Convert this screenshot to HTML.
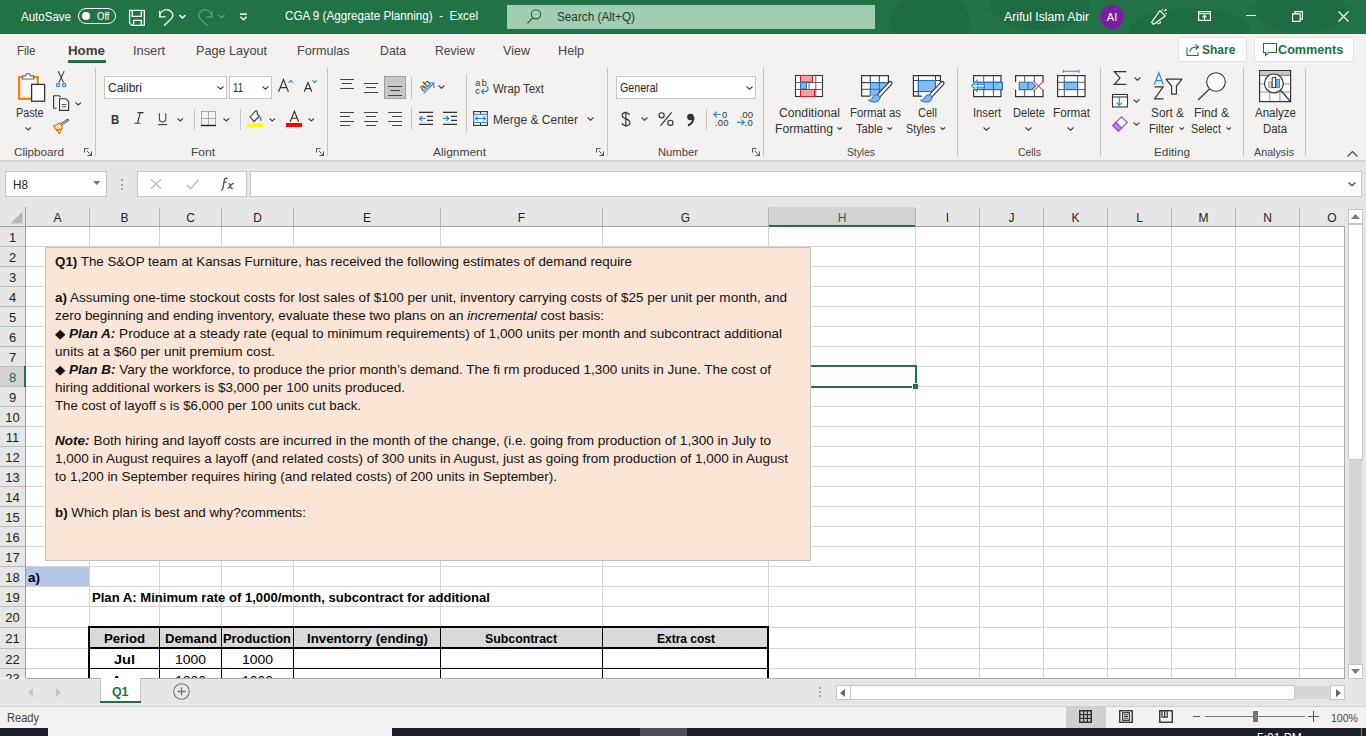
<!DOCTYPE html>
<html><head><meta charset="utf-8"><style>
*{margin:0;padding:0;box-sizing:border-box}
html,body{width:1366px;height:736px;overflow:hidden;background:#fff;font-family:"Liberation Sans",sans-serif;color:#262626}
.a{position:absolute;white-space:nowrap}
.t{position:absolute;white-space:nowrap;line-height:1}
svg{position:absolute;overflow:visible}
</style></head><body>
<div class="a" style="left:0px;top:0px;width:1366px;height:34px;background:#217346;"></div>
<svg style="left:0px;top:0px;overflow:hidden" width="1366" height="34" viewBox="0 0 1366 34"><g fill="#1f6c42"><ellipse cx="930" cy="22" rx="40" ry="30"/><ellipse cx="1040" cy="5" rx="50" ry="25"/><ellipse cx="1190" cy="30" rx="60" ry="22"/><ellipse cx="1300" cy="8" rx="45" ry="25"/></g></svg>
<div class="t" style="left:21.00px;top:11.44px;font-size:12px;color:#fff;;transform:scaleX(0.9607);transform-origin:0 0;">AutoSave</div>
<div class="a" style="left:78px;top:8px;width:38px;height:16px;background:transparent;border:1px solid #fff;border-radius:8px"></div>
<div class="a" style="left:82px;top:12px;width:8px;height:8px;background:#fff;border-radius:50%"></div>
<div class="t" style="left:97.00px;top:12.13px;font-size:10px;color:#fff;;transform:scaleX(0.9501);transform-origin:0 0;">Off</div>
<svg style="left:0px;top:0px;" width="260" height="34" viewBox="0 0 260 34"><g fill="none" stroke="#fff" stroke-width="1.3"><path d="M129.6 10.3h14.7v15.1H131.9l-2.3-2.3z"/><path d="M132.3 10.3v6h9v-6M133.6 25.4v-5h7.7v5"/><path d="M159.6 10.7v6.2h6.1"/><path d="M159.8 16.6a6.6 6.6 0 0 1 11.4-4.8a5 5 0 0 1 0.6 6.4L164 25.7"/><path d="M179.4 15l3 3l3-3" stroke-width="1.5"/></g><g fill="none" stroke="#5f9e7b" stroke-width="1.3"><path d="M211.9 10.7v6.2h-6.1"/><path d="M211.7 16.6a6.6 6.6 0 0 0-11.4-4.8a5 5 0 0 0-0.6 6.4L207.5 25.7"/><path d="M218.8 15l2.8 2.8l2.8-2.8" stroke-width="1.3"/></g><g fill="none" stroke="#fff" stroke-width="1.4"><path d="M240 14.1h7"/><path d="M240.4 16.8l3.1 3l3.1-3"/></g></svg>
<div class="t" style="left:285.00px;top:10.01px;font-size:12.5px;color:#fff;;transform:scaleX(0.9321);transform-origin:0 0;">CGA 9 (Aggregate Planning)&nbsp; -&nbsp; Excel</div>
<div class="a" style="left:507px;top:5px;width:368px;height:24px;background:#a0cdb4;"></div>
<svg style="left:527px;top:10px;" width="16" height="15" viewBox="0 0 16 15"><circle cx="9" cy="4.3" r="4.6" fill="none" stroke="#1b5e37" stroke-width="1.1"/><path d="M5.8 7.6L0.5 13.3" stroke="#1b5e37" stroke-width="1.2"/></svg>
<div class="t" style="left:557.00px;top:11.01px;font-size:12.5px;color:#1d3d2a;;transform:scaleX(0.9396);transform-origin:0 0;">Search (Alt+Q)</div>
<div class="t" style="left:1004.00px;top:11.01px;font-size:12.5px;color:#fff;;transform:scaleX(0.9788);transform-origin:0 0;">Ariful Islam Abir</div>
<div class="a" style="left:1100px;top:5px;width:24px;height:24px;border-radius:50%;background:#7b1fa2;color:#fff;font-size:11px;line-height:24px;text-align:center">AI</div>
<svg style="left:1140px;top:0px;" width="40" height="34" viewBox="0 0 40 34"><g transform="translate(-1140 0)" fill="none" stroke="#fff" stroke-width="1.2" stroke-linejoin="round"><path d="M1151.6 22.3L1159.9 10.6L1165.2 15.9L1153.6 24.3z"/><path d="M1156.8 22.4a1.8 1.8 0 0 0 3.5-1.2"/><path d="M1162.5 9.2v1.3M1164.4 11.2l2.2-1.9M1165.4 13.5h1.6"/></g></svg>
<svg style="left:1198px;top:11px;" width="13" height="10" viewBox="0 0 13 10"><rect x="0.6" y="0.6" width="11.8" height="8.8" fill="none" stroke="#fff" stroke-width="1.2"/><path d="M0.6 2.8h11.8M6.5 9V4.5M4.5 6.3l2-2l2 2" fill="none" stroke="#fff" stroke-width="1.1"/></svg>
<div class="a" style="left:1246px;top:15px;width:10px;height:1px;background:#fff;"></div>
<svg style="left:1292px;top:11px;" width="11" height="11" viewBox="0 0 11 11"><path d="M0.6 2.9h7.5v7.5H0.6z M2.9 2.9V0.6h7.5v7.5H8.1" fill="none" stroke="#fff" stroke-width="1.1"/></svg>
<svg style="left:1338px;top:11px;" width="11" height="11" viewBox="0 0 11 11"><path d="M0.5 0.5l10 10M10.5 0.5l-10 10" stroke="#fff" stroke-width="1.2"/></svg>
<div class="a" style="left:0px;top:34px;width:1366px;height:127px;background:#f3f2f1;"></div>
<div class="t" style="left:17.00px;top:43.59px;font-size:13px;color:#444;;transform:scaleX(0.8829);transform-origin:0 0;">File</div>
<div class="t" style="left:68.00px;top:43.59px;font-size:13px;color:#404040;font-weight:bold;transform:scaleX(1.0242);transform-origin:0 0;">Home</div>
<div class="t" style="left:133.00px;top:43.59px;font-size:13px;color:#444;;transform:scaleX(0.9841);transform-origin:0 0;">Insert</div>
<div class="t" style="left:196.00px;top:43.59px;font-size:13px;color:#444;;transform:scaleX(0.9724);transform-origin:0 0;">Page Layout</div>
<div class="t" style="left:297.00px;top:43.59px;font-size:13px;color:#444;;transform:scaleX(0.9689);transform-origin:0 0;">Formulas</div>
<div class="t" style="left:379.50px;top:43.59px;font-size:13px;color:#444;;transform:scaleX(0.9465);transform-origin:0 0;">Data</div>
<div class="t" style="left:435.30px;top:43.59px;font-size:13px;color:#444;;transform:scaleX(0.9290);transform-origin:0 0;">Review</div>
<div class="t" style="left:503.00px;top:43.59px;font-size:13px;color:#444;;transform:scaleX(0.9659);transform-origin:0 0;">View</div>
<div class="t" style="left:558.30px;top:43.59px;font-size:13px;color:#444;;transform:scaleX(0.9720);transform-origin:0 0;">Help</div>
<div class="a" style="left:68px;top:60px;width:38px;height:3px;background:#217346;"></div>
<div class="a" style="left:1178px;top:37px;width:69px;height:25px;background:#fff;border:1px solid #e1dfdd;border-radius:2px"></div>
<svg style="left:1186px;top:43px;" width="14" height="13" viewBox="0 0 14 13"><path d="M1 4.5v8h11v-3" fill="none" stroke="#217346" stroke-width="1.1"/><path d="M4 9c0-4 3-5 8-5M9.5 1.5l3 2.5l-3 2.5" fill="none" stroke="#217346" stroke-width="1.1"/></svg>
<div class="t" style="left:1202.30px;top:43.71px;font-size:12.5px;color:#217346;font-weight:bold;transform:scaleX(0.9612);transform-origin:0 0;">Share</div>
<div class="a" style="left:1254px;top:37px;width:100px;height:25px;background:#fff;border:1px solid #e1dfdd;border-radius:2px"></div>
<svg style="left:1263px;top:43px;" width="14" height="13" viewBox="0 0 14 13"><path d="M0.5 0.5h13v9h-8l-3 3v-3h-2z" fill="none" stroke="#217346" stroke-width="1.1"/></svg>
<div class="t" style="left:1278.30px;top:43.71px;font-size:12.5px;color:#217346;font-weight:bold;transform:scaleX(1.0109);transform-origin:0 0;">Comments</div>
<div class="a" style="left:95px;top:68px;width:1px;height:88px;background:#c8c6c4;"></div>
<div class="a" style="left:327px;top:68px;width:1px;height:88px;background:#c8c6c4;"></div>
<div class="a" style="left:607px;top:68px;width:1px;height:88px;background:#c8c6c4;"></div>
<div class="a" style="left:763px;top:68px;width:1px;height:88px;background:#c8c6c4;"></div>
<div class="a" style="left:957px;top:68px;width:1px;height:88px;background:#c8c6c4;"></div>
<div class="a" style="left:1100px;top:68px;width:1px;height:88px;background:#c8c6c4;"></div>
<div class="a" style="left:1243px;top:68px;width:1px;height:88px;background:#c8c6c4;"></div>
<div class="a" style="left:1305px;top:68px;width:1px;height:88px;background:#c8c6c4;"></div>
<div class="t" style="left:14.00px;top:146.86px;font-size:11.5px;color:#444;;transform:scaleX(1.0156);transform-origin:0 0;">Clipboard</div>
<div class="t" style="left:191.00px;top:146.86px;font-size:11.5px;color:#444;;transform:scaleX(1.0428);transform-origin:0 0;">Font</div>
<div class="t" style="left:433.00px;top:146.86px;font-size:11.5px;color:#444;;transform:scaleX(1.0364);transform-origin:0 0;">Alignment</div>
<div class="t" style="left:658.00px;top:146.86px;font-size:11.5px;color:#444;;transform:scaleX(0.9778);transform-origin:0 0;">Number</div>
<div class="t" style="left:847.00px;top:146.86px;font-size:11.5px;color:#444;;transform:scaleX(0.8938);transform-origin:0 0;">Styles</div>
<div class="t" style="left:1018.00px;top:146.86px;font-size:11.5px;color:#444;;transform:scaleX(0.8998);transform-origin:0 0;">Cells</div>
<div class="t" style="left:1154.00px;top:146.86px;font-size:11.5px;color:#444;;transform:scaleX(1.0235);transform-origin:0 0;">Editing</div>
<div class="t" style="left:1254.00px;top:146.86px;font-size:11.5px;color:#444;;transform:scaleX(0.9340);transform-origin:0 0;">Analysis</div>
<svg style="left:84px;top:148px;" width="8" height="8" viewBox="0 0 8 8"><path d="M0.5 7.5V0.5h7v7z" fill="none" stroke="#666" stroke-width="0"/><path d="M0.5 0.5h4M0.5 0.5v4M2.5 2.5l5 5M7.5 3.5v4h-4" fill="none" stroke="#555" stroke-width="1"/></svg>
<svg style="left:316px;top:148px;" width="8" height="8" viewBox="0 0 8 8"><path d="M0.5 7.5V0.5h7v7z" fill="none" stroke="#666" stroke-width="0"/><path d="M0.5 0.5h4M0.5 0.5v4M2.5 2.5l5 5M7.5 3.5v4h-4" fill="none" stroke="#555" stroke-width="1"/></svg>
<svg style="left:596px;top:148px;" width="8" height="8" viewBox="0 0 8 8"><path d="M0.5 7.5V0.5h7v7z" fill="none" stroke="#666" stroke-width="0"/><path d="M0.5 0.5h4M0.5 0.5v4M2.5 2.5l5 5M7.5 3.5v4h-4" fill="none" stroke="#555" stroke-width="1"/></svg>
<svg style="left:752px;top:148px;" width="8" height="8" viewBox="0 0 8 8"><path d="M0.5 7.5V0.5h7v7z" fill="none" stroke="#666" stroke-width="0"/><path d="M0.5 0.5h4M0.5 0.5v4M2.5 2.5l5 5M7.5 3.5v4h-4" fill="none" stroke="#555" stroke-width="1"/></svg>
<svg style="left:0px;top:60px;" width="100" height="80" viewBox="0 0 100 80"><g transform="translate(0 -60)"><rect x="19" y="77" width="18.8" height="21.9" fill="#f7f7f7" stroke="#e37b0c" stroke-width="1.8"/><rect x="20.6" y="78.6" width="15.6" height="18.7" fill="none" stroke="#fbd89a" stroke-width="1.2"/><path d="M22.6 79V75.8h3.2a2.3 2.3 0 0 1 4.6 0h3.2V79z" fill="#fff" stroke="#6a6a6a" stroke-width="1.2"/><rect x="31.6" y="84.4" width="13" height="16.8" fill="#fff" stroke="#333" stroke-width="1.3"/><path d="M58.2 71.2L63.5 82.5M64.2 71.2L58.9 82.5" stroke="#444" stroke-width="1.1"/><circle cx="58" cy="85" r="1.6" fill="none" stroke="#2b88d8" stroke-width="1.3"/><circle cx="64.2" cy="85" r="1.6" fill="none" stroke="#2b88d8" stroke-width="1.3"/><path d="M56.6 108.2h-3v-12.5h5.6l1.6 1.6" fill="none" stroke="#333" stroke-width="1.1"/><path d="M59.6 98.8h6.2l2.8 2.8v8.8h-9z" fill="#fff" stroke="#333" stroke-width="1.1"/><path d="M61.8 104.5h4.5M61.8 106.8h4.5" stroke="#333" stroke-width="0.9"/><path d="M60.5 125l7.2-4.8" stroke="#444" stroke-width="2.6" stroke-linecap="round"/><path d="M60.5 125l7.2-4.8" stroke="#fff" stroke-width="0.9" stroke-linecap="round"/><path d="M53.5 126l6-3l3 4l-2.8 6.5z" fill="#fbe3c1" stroke="#e07b00" stroke-width="1.2" stroke-linejoin="round"/><path d="M56 130.5l4.5-1.5" stroke="#e07b00" stroke-width="1.4"/></g></svg>
<div class="t" style="left:15.70px;top:107.44px;font-size:12px;color:#333;;transform:scaleX(0.8994);transform-origin:0 0;">Paste</div>
<svg style="left:25.25px;top:126.875px;" width="6.5" height="3.25" viewBox="0 0 6.5 3.25"><path d="M0.5 0.5L3.25 2.95L6.0 0.5" fill="none" stroke="#444" stroke-width="1.1"/></svg>
<svg style="left:75.25px;top:101.775px;" width="6.5" height="3.25" viewBox="0 0 6.5 3.25"><path d="M0.5 0.5L3.25 2.95L6.0 0.5" fill="none" stroke="#444" stroke-width="1.1"/></svg>
<div class="a" style="left:104px;top:76px;width:123px;height:23px;background:#fff;border:1px solid #c8c6c4"></div>
<div class="t" style="left:107.50px;top:82.14px;font-size:12px;color:#262626;;transform:scaleX(0.9995);transform-origin:0 0;">Calibri</div>
<svg style="left:217.0px;top:86.25px;" width="7" height="3.5" viewBox="0 0 7 3.5"><path d="M0.5 0.5L3.5 3.2L6.5 0.5" fill="none" stroke="#444" stroke-width="1.1"/></svg>
<div class="a" style="left:229px;top:76px;width:43px;height:23px;background:#fff;border:1px solid #c8c6c4"></div>
<div class="t" style="left:233.00px;top:82.14px;font-size:12px;color:#262626;;transform:scaleX(0.8020);transform-origin:0 0;">11</div>
<svg style="left:262.0px;top:86.25px;" width="7" height="3.5" viewBox="0 0 7 3.5"><path d="M0.5 0.5L3.5 3.2L6.5 0.5" fill="none" stroke="#444" stroke-width="1.1"/></svg>
<svg style="left:0px;top:60px;" width="340" height="80" viewBox="0 0 340 80"><g transform="translate(0 -60)" fill="none"><path d="M278.6 91.7L283.5 79.6L288.4 91.7M280.3 87.6h6.4" stroke="#333" stroke-width="1.2"/><path d="M288.6 82.8l2.2-2.3l2.2 2.3" stroke="#2b88d8" stroke-width="1.2"/><path d="M304.2 91.7L308 82.5L311.8 91.7M305.5 88.6h5" stroke="#333" stroke-width="1.15"/><path d="M312.4 80.4l2.2 2.1l2.2-2.1" stroke="#2b88d8" stroke-width="1.2"/><path d="M159.4 113.2v5.6a3.2 3.2 0 0 0 6.4 0v-5.6" stroke="#444" stroke-width="1.1"/><path d="M158.2 124.6h8.8" stroke="#333" stroke-width="1.1"/><path d="M201.5 111.5h14M201.5 118.5h14M208.5 111.5v14M201.5 111.5v14M215.5 111.5v14" stroke="#666" stroke-width="1" stroke-dasharray="1 1"/><path d="M201 125.5h15" stroke="#222" stroke-width="1.4"/><path d="M250 117l5-5.5c1-1 2-1 2.3 0.3v2.4l2 2l-5.2 5.5z" stroke="#333" stroke-width="1.1" stroke-linejoin="round"/><path d="M258.5 116c1.5 0.5 2.5 2 2.3 4.8" stroke="#2b88d8" stroke-width="1.5"/><path d="M290.2 121.7L294.4 111.2L298.6 121.7M291.7 118.2h5.4" stroke="#333" stroke-width="1.15"/></g></svg>
<div class="t" style="left:111.20px;top:112.59px;font-size:13px;color:#333;font-weight:bold;transform:scaleX(0.8732);transform-origin:0 0;">B</div>
<svg style="left:134px;top:112px;" width="10" height="12" viewBox="0 0 10 12"><path d="M3.5 0.6h6M0.5 11.2h6M6.3 0.6L3.5 11.2" stroke="#333" stroke-width="1.1" fill="none"/></svg>
<div class="a" style="left:247px;top:123px;width:16px;height:4px;background:#ffff00;"></div>
<div class="a" style="left:286px;top:123px;width:16px;height:4px;background:#ff0000;"></div>
<svg style="left:177.35px;top:117.675px;" width="6.5" height="3.25" viewBox="0 0 6.5 3.25"><path d="M0.5 0.5L3.25 2.95L6.0 0.5" fill="none" stroke="#444" stroke-width="1.1"/></svg>
<svg style="left:223.05px;top:117.675px;" width="6.5" height="3.25" viewBox="0 0 6.5 3.25"><path d="M0.5 0.5L3.25 2.95L6.0 0.5" fill="none" stroke="#444" stroke-width="1.1"/></svg>
<svg style="left:269.35px;top:117.675px;" width="6.5" height="3.25" viewBox="0 0 6.5 3.25"><path d="M0.5 0.5L3.25 2.95L6.0 0.5" fill="none" stroke="#444" stroke-width="1.1"/></svg>
<svg style="left:308.35px;top:117.675px;" width="6.5" height="3.25" viewBox="0 0 6.5 3.25"><path d="M0.5 0.5L3.25 2.95L6.0 0.5" fill="none" stroke="#444" stroke-width="1.1"/></svg>
<div class="a" style="left:193.5px;top:109px;width:1px;height:21px;background:#c8c6c4;"></div>
<div class="a" style="left:239.5px;top:109px;width:1px;height:21px;background:#c8c6c4;"></div>
<div class="a" style="left:340px;top:79.0px;width:14px;height:1px;background:#444;"></div>
<div class="a" style="left:342px;top:83.3px;width:10px;height:1px;background:#444;"></div>
<div class="a" style="left:340px;top:87.6px;width:14px;height:1px;background:#444;"></div>
<div class="a" style="left:364px;top:83.0px;width:14px;height:1px;background:#444;"></div>
<div class="a" style="left:366px;top:87.3px;width:10px;height:1px;background:#444;"></div>
<div class="a" style="left:364px;top:91.6px;width:14px;height:1px;background:#444;"></div>
<div class="a" style="left:384px;top:76px;width:22px;height:23px;background:#c8c6c4;border:1px solid #a19f9d"></div>
<div class="a" style="left:388px;top:86.0px;width:14px;height:1px;background:#444;"></div>
<div class="a" style="left:390px;top:90.3px;width:10px;height:1px;background:#444;"></div>
<div class="a" style="left:388px;top:94.6px;width:14px;height:1px;background:#444;"></div>
<div class="a" style="left:410.5px;top:77px;width:1px;height:22px;background:#c8c6c4;"></div>
<svg style="left:400px;top:60px;" width="100" height="80" viewBox="0 0 100 80"><g transform="translate(-400 -60)"><text x="418" y="90" font-size="10.5" font-family="Liberation Sans" fill="#333" transform="rotate(-45 423 85)">ab</text><path d="M423.6 93.3L433.5 83.4M428.6 83h5.2v5.2" fill="none" stroke="#2b88d8" stroke-width="1.2"/></g></svg>
<svg style="left:438.0px;top:85.25px;" width="7" height="3.5" viewBox="0 0 7 3.5"><path d="M0.5 0.5L3.5 3.2L6.5 0.5" fill="none" stroke="#444" stroke-width="1.1"/></svg>
<div class="a" style="left:465.5px;top:74px;width:1px;height:59px;background:#c8c6c4;"></div>
<svg style="left:400px;top:60px;" width="100" height="80" viewBox="0 0 100 80"><g transform="translate(-400 -60)"><text x="475.2" y="86.4" font-size="9" font-family="Liberation Sans" fill="#333" textLength="11.6">ab</text><text x="475.2" y="93.6" font-size="9" font-family="Liberation Sans" fill="#333">c</text><path d="M486.5 86.6c2.2 0.5 2.4 4.6-1.2 4.9h-3.6M484 89l-2.5 2.5l2.5 2.5" fill="none" stroke="#2b88d8" stroke-width="1.2"/></g></svg>
<div class="t" style="left:492.50px;top:82.74px;font-size:12px;color:#333;;transform:scaleX(0.9519);transform-origin:0 0;">Wrap Text</div>
<div class="a" style="left:340px;top:112.0px;width:14px;height:1px;background:#444;"></div>
<div class="a" style="left:340px;top:116.3px;width:10px;height:1px;background:#444;"></div>
<div class="a" style="left:340px;top:120.6px;width:14px;height:1px;background:#444;"></div>
<div class="a" style="left:340px;top:124.9px;width:10px;height:1px;background:#444;"></div>
<div class="a" style="left:364px;top:112.0px;width:14px;height:1px;background:#444;"></div>
<div class="a" style="left:366px;top:116.3px;width:10px;height:1px;background:#444;"></div>
<div class="a" style="left:364px;top:120.6px;width:14px;height:1px;background:#444;"></div>
<div class="a" style="left:366px;top:124.9px;width:10px;height:1px;background:#444;"></div>
<div class="a" style="left:388px;top:112.0px;width:14px;height:1px;background:#444;"></div>
<div class="a" style="left:392px;top:116.3px;width:10px;height:1px;background:#444;"></div>
<div class="a" style="left:388px;top:120.6px;width:14px;height:1px;background:#444;"></div>
<div class="a" style="left:392px;top:124.9px;width:10px;height:1px;background:#444;"></div>
<div class="a" style="left:410.5px;top:108px;width:1px;height:22px;background:#c8c6c4;"></div>
<svg style="left:400px;top:100px;" width="100" height="40" viewBox="0 0 100 40"><g transform="translate(-400 -100)"><path d="M419 112.4h14M427 116.4h6M427 120.4h6M419 124.4h14" stroke="#333" stroke-width="1.1"/><path d="M425.4 118.4H419.6M422 116l-2.4 2.4l2.4 2.4" fill="none" stroke="#2b88d8" stroke-width="1.2"/></g></svg>
<svg style="left:400px;top:100px;" width="100" height="40" viewBox="0 0 100 40"><g transform="translate(-400 -100)"><path d="M443 112.4h14M451 116.4h6M451 120.4h6M443 124.4h14" stroke="#333" stroke-width="1.1"/><path d="M443 118.4h5.8M446.4 116l2.4 2.4l-2.4 2.4" fill="none" stroke="#2b88d8" stroke-width="1.2"/></g></svg>
<svg style="left:400px;top:100px;" width="100" height="40" viewBox="0 0 100 40"><g transform="translate(-400 -100)"><rect x="473.6" y="111.6" width="13.8" height="13.8" fill="#fff" stroke="#333" stroke-width="1.1"/><path d="M480.5 111.6v3M480.5 122.5v3" stroke="#333" stroke-width="1"/><rect x="473.6" y="114.3" width="13.8" height="8.2" fill="none" stroke="#2b88d8" stroke-width="1.1"/><path d="M475.5 118.4h10M477.6 116.3l-2.1 2.1l2.1 2.1M483.4 116.3l2.1 2.1l-2.1 2.1" fill="none" stroke="#2b88d8" stroke-width="1.2"/></g></svg>
<div class="t" style="left:492.50px;top:114.44px;font-size:12px;color:#333;;transform:scaleX(1.0035);transform-origin:0 0;">Merge &amp; Center</div>
<svg style="left:587.0px;top:117.25px;" width="7" height="3.5" viewBox="0 0 7 3.5"><path d="M0.5 0.5L3.5 3.2L6.5 0.5" fill="none" stroke="#444" stroke-width="1.1"/></svg>
<div class="a" style="left:616px;top:76px;width:140px;height:23px;background:#fff;border:1px solid #c8c6c4"></div>
<div class="t" style="left:619.50px;top:82.24px;font-size:12px;color:#262626;;transform:scaleX(0.8899);transform-origin:0 0;">General</div>
<svg style="left:745.5px;top:86.25px;" width="7" height="3.5" viewBox="0 0 7 3.5"><path d="M0.5 0.5L3.5 3.2L6.5 0.5" fill="none" stroke="#444" stroke-width="1.1"/></svg>
<svg style="left:600px;top:100px;" width="160" height="40" viewBox="0 0 160 40"><g transform="translate(-600 -100)" fill="none" stroke="#333" stroke-width="1.15"><path d="M629.6 115c-0.7-1.5-2.2-2.4-3.9-2.4c-2 0-3.4 1.2-3.4 2.9c0 4.1 7.6 2.7 7.6 7c0 1.9-1.6 3.2-3.8 3.2c-1.9 0-3.4-0.9-4-2.4"/><path d="M625.9 111.6v15.4"/><circle cx="661.6" cy="115.3" r="2.6"/><circle cx="670.4" cy="122.8" r="2.6"/><path d="M671.6 112.4L660.4 125.8"/></g></svg>
<svg style="left:641.0px;top:117.25px;" width="7" height="3.5" viewBox="0 0 7 3.5"><path d="M0.5 0.5L3.5 3.2L6.5 0.5" fill="none" stroke="#444" stroke-width="1.1"/></svg>
<svg style="left:686px;top:113px;" width="9" height="13" viewBox="0 0 9 13"><circle cx="4.5" cy="4" r="3.3" fill="#333"/><path d="M7.5 4c0 4-2 7-5.5 8.5" fill="none" stroke="#333" stroke-width="2"/></svg>
<div class="a" style="left:705.5px;top:109px;width:1px;height:21px;background:#c8c6c4;"></div>
<svg style="left:700px;top:100px;" width="60" height="40" viewBox="0 0 60 40"><g transform="translate(-700 -100)"><path d="M720.8 114.5H714M716.8 111.8L714 114.5L716.8 117.2" fill="none" stroke="#2b88d8" stroke-width="1.2"/><text x="722" y="118.3" font-size="9.5" font-family="Liberation Sans" fill="#333" textLength="6">0</text><text x="715" y="125.8" font-size="9.5" font-family="Liberation Sans" fill="#333" textLength="13.5">.00</text><text x="739.5" y="118.3" font-size="9.5" font-family="Liberation Sans" fill="#333" textLength="13.5">.00</text><path d="M737 122.3h7.3M741.5 119.6L744.3 122.3L741.5 125" fill="none" stroke="#2b88d8" stroke-width="1.2"/><text x="744.3" y="125.8" font-size="9.5" font-family="Liberation Sans" fill="#333" textLength="8.4">.0</text></g></svg>
<svg style="left:795px;top:75px;" width="28" height="22" viewBox="0 0 28 22"><rect x="0" y="0" width="28" height="22" fill="#fff"/><rect x="0.5" y="0.5" width="27" height="21" fill="none" stroke="#333" stroke-width="1.1"/><path d="M7.2 0.5V21.5" stroke="#555" stroke-width="0.9"/><path d="M14.0 0.5V21.5" stroke="#555" stroke-width="0.9"/><path d="M20.8 0.5V21.5" stroke="#555" stroke-width="0.9"/><path d="M0.5 7.5H27.5" stroke="#555" stroke-width="0.9"/><path d="M0.5 14.5H27.5" stroke="#555" stroke-width="0.9"/><rect x="5.5" y="0.5" width="12" height="6.5" fill="#f4a0a6" stroke="#e81123" stroke-width="1"/><rect x="5.5" y="7.5" width="6" height="6.5" fill="#7fb6ea" stroke="#2b6cb8" stroke-width="1"/><rect x="5.5" y="14.5" width="14" height="7" fill="#f4a0a6" stroke="#e81123" stroke-width="1"/></svg>
<div class="t" style="left:778.50px;top:106.94px;font-size:12px;color:#333;;transform:scaleX(1.0159);transform-origin:0 0;">Conditional</div>
<div class="t" style="left:774.60px;top:122.94px;font-size:12px;color:#333;;transform:scaleX(1.0112);transform-origin:0 0;">Formatting</div>
<svg style="left:836.95px;top:127.125px;" width="5.5" height="2.75" viewBox="0 0 5.5 2.75"><path d="M0.5 0.5L2.75 2.45L5.0 0.5" fill="none" stroke="#444" stroke-width="1.1"/></svg>
<svg style="left:850px;top:65px;" width="100" height="40" viewBox="0 0 100 40"><g transform="translate(-850 -65)"><rect x="861.6" y="75.6" width="26.8" height="20.6" fill="#fff"/><rect x="870.3" y="82.6" width="18.1" height="13.6" fill="#85bdea"/><path d="M870.3 82.6h18.1M870.3 89.2h18.1M879.3 82.6v13.6M870.3 82.6v13.6" stroke="#1e6fc1" stroke-width="1.1"/><path d="M861.6 82.6h8.7M861.6 89.2h8.7M870.3 75.6v7M879.3 75.6v7" stroke="#444" stroke-width="1.1"/><path d="M888.4 82.6V75.6H861.6V96.2H870" fill="none" stroke="#333" stroke-width="1.2"/><path d="M891.5 84l-13 13l-5 5l15-1z" fill="#f3f2f1"/><path d="M890.3 83.2L879 95.5" stroke="#333" stroke-width="4.4" stroke-linecap="round"/><path d="M890.3 83.2L879 95.5" stroke="#fff" stroke-width="2.2" stroke-linecap="round"/><path d="M868.6 100.3c2.5 0.2 3.5-2.2 5-4.3c1.5-1.6 4.3-1.7 5.6-0.3c1.5 1.6 0.8 4.3-1.3 5.6c-2.5 1.5-6.5 0.8-9.3-1z" fill="#7fb6ea" stroke="#1e6fc1" stroke-width="1"/></g></svg>
<div class="t" style="left:849.50px;top:106.94px;font-size:12px;color:#333;;transform:scaleX(0.9442);transform-origin:0 0;">Format as</div>
<div class="t" style="left:856.30px;top:122.94px;font-size:12px;color:#333;;transform:scaleX(0.9307);transform-origin:0 0;">Table</div>
<svg style="left:887.05px;top:127.125px;" width="5.5" height="2.75" viewBox="0 0 5.5 2.75"><path d="M0.5 0.5L2.75 2.45L5.0 0.5" fill="none" stroke="#444" stroke-width="1.1"/></svg>
<svg style="left:905px;top:65px;" width="45" height="40" viewBox="0 0 45 40"><g transform="translate(-905 -65)"><rect x="913.4" y="75.6" width="27" height="20.6" fill="#fff"/><path d="M913.4 80.5h5M935.5 80.5h5M913.4 91.6h5M918.4 75.6v20.6M935.5 75.6v5" stroke="#444" stroke-width="1.1"/><rect x="918.4" y="80.5" width="17.1" height="11.1" fill="#85bdea" stroke="#1e6fc1" stroke-width="1.1"/><path d="M940.4 82.6V75.6H913.4V96.2H922" fill="none" stroke="#333" stroke-width="1.2"/><path d="M943.5 84l-13 13l-5 5l15-1z" fill="#f3f2f1"/><path d="M942.3 83.2L931 95.5" stroke="#333" stroke-width="4.4" stroke-linecap="round"/><path d="M942.3 83.2L931 95.5" stroke="#fff" stroke-width="2.2" stroke-linecap="round"/><path d="M920.6 100.3c2.5 0.2 3.5-2.2 5-4.3c1.5-1.6 4.3-1.7 5.6-0.3c1.5 1.6 0.8 4.3-1.3 5.6c-2.5 1.5-6.5 0.8-9.3-1z" fill="#7fb6ea" stroke="#1e6fc1" stroke-width="1"/></g></svg>
<div class="t" style="left:917.50px;top:106.94px;font-size:12px;color:#333;;transform:scaleX(0.9191);transform-origin:0 0;">Cell</div>
<div class="t" style="left:906.40px;top:122.94px;font-size:12px;color:#333;;transform:scaleX(0.8994);transform-origin:0 0;">Styles</div>
<svg style="left:939.95px;top:127.125px;" width="5.5" height="2.75" viewBox="0 0 5.5 2.75"><path d="M0.5 0.5L2.75 2.45L5.0 0.5" fill="none" stroke="#444" stroke-width="1.1"/></svg>
<svg style="left:960px;top:65px;" width="135" height="40" viewBox="0 0 135 40"><g transform="translate(-960 -65)"><rect x="973.6" y="75.6" width="27.4" height="21" fill="#fff"/><path d="M973.6 82.3V75.6H1001V96.6H973.6V89.6" fill="none" stroke="#333" stroke-width="1.2"/><path d="M983.7 75.6v21M993.4 75.6v21M973.6 82.3h27.4M973.6 89.6h27.4" stroke="#555" stroke-width="1"/><rect x="977.4" y="82.3" width="25" height="7.3" fill="#85bdea" stroke="#1e6fc1" stroke-width="1.1"/><path d="M984.2 82.3v7.3M993.4 82.3v7.3" stroke="#1e6fc1" stroke-width="1.1"/><path d="M984 84.7h-10.5M984 86.9h-10.5" stroke="#2b88d8" stroke-width="1"/><path d="M973.5 85.8h10.5" stroke="#fff" stroke-width="1.2"/><path d="M977.8 79.6L971.7 85.8L977.8 92" fill="none" stroke="#2b88d8" stroke-width="1.2"/><rect x="1015.6" y="75.6" width="27.4" height="21" fill="#fff"/><path d="M1015.6 82.3V75.6H1043V82.3M1015.6 89.6V96.6H1043V89.6" fill="none" stroke="#333" stroke-width="1.2"/><path d="M1024.7 75.6v7M1034.4 75.6v7M1024.7 89.6v7M1034.4 89.6v7" stroke="#555" stroke-width="1"/><path d="M1019.3 82.3h12.6l3.6 3.6l-3.6 3.7h-12.6z" fill="#85bdea" stroke="#1e6fc1" stroke-width="1.1"/><path d="M1028.1 82.3v7.3" stroke="#1e6fc1" stroke-width="1.1"/><path d="M1033.2 80.6l10.8 10.8M1044 80.6l-10.8 10.8" stroke="#f04a4a" stroke-width="1.1"/><rect x="1057.6" y="75.6" width="27.4" height="21" fill="#fff" stroke="#333" stroke-width="1.2"/><path d="M1064.3 75.6v21M1077.6 75.6v21M1057.6 82.3h27.4M1057.6 89.6h27.4" stroke="#555" stroke-width="1"/><rect x="1064.3" y="82.3" width="13.3" height="7.3" fill="#85bdea" stroke="#1e6fc1" stroke-width="1.1"/><path d="M1063.3 71.3h15.6M1063.3 69.8v3M1078.9 69.8v3" stroke="#2b88d8" stroke-width="1.1"/></g></svg>
<div class="t" style="left:972.50px;top:107.44px;font-size:12px;color:#333;;transform:scaleX(0.9328);transform-origin:0 0;">Insert</div>
<svg style="left:983.0px;top:126.75px;" width="7" height="3.5" viewBox="0 0 7 3.5"><path d="M0.5 0.5L3.5 3.2L6.5 0.5" fill="none" stroke="#444" stroke-width="1.1"/></svg>
<div class="t" style="left:1012.50px;top:107.44px;font-size:12px;color:#333;;transform:scaleX(0.9225);transform-origin:0 0;">Delete</div>
<svg style="left:1025.0px;top:126.75px;" width="7" height="3.5" viewBox="0 0 7 3.5"><path d="M0.5 0.5L3.5 3.2L6.5 0.5" fill="none" stroke="#444" stroke-width="1.1"/></svg>
<div class="t" style="left:1052.50px;top:107.44px;font-size:12px;color:#333;;transform:scaleX(0.9733);transform-origin:0 0;">Format</div>
<svg style="left:1067.0px;top:126.75px;" width="7" height="3.5" viewBox="0 0 7 3.5"><path d="M0.5 0.5L3.5 3.2L6.5 0.5" fill="none" stroke="#444" stroke-width="1.1"/></svg>
<svg style="left:1113px;top:71px;" width="14" height="14" viewBox="0 0 14 14"><path d="M13.2 0.7H1.4L7 6.9L1.4 13.3H13.2" fill="none" stroke="#333" stroke-width="1.2"/></svg>
<svg style="left:1133.5px;top:76.75px;" width="7" height="3.5" viewBox="0 0 7 3.5"><path d="M0.5 0.5L3.5 3.2L6.5 0.5" fill="none" stroke="#444" stroke-width="1.1"/></svg>
<svg style="left:1112px;top:94px;" width="16" height="14" viewBox="0 0 16 14"><rect x="0.5" y="0.5" width="15" height="12.5" fill="#fff" stroke="#333" stroke-width="1.1"/><path d="M0.5 3h15" stroke="#333" stroke-width="1.1"/><path d="M7.3 3.8v7.6M4.6 8.6L7.3 11.3l2.7-2.7" fill="none" stroke="#2b88d8" stroke-width="1.2"/></svg>
<svg style="left:1132.5px;top:99.25px;" width="7" height="3.5" viewBox="0 0 7 3.5"><path d="M0.5 0.5L3.5 3.2L6.5 0.5" fill="none" stroke="#444" stroke-width="1.1"/></svg>
<svg style="left:1112px;top:116px;" width="16" height="16" viewBox="0 0 16 16"><path d="M0.8 9.5L9.5 0.8L15.2 6.5L6.5 15.2z" fill="#fff" stroke="#9b4fc4" stroke-width="1.1"/><path d="M0.8 9.5L4 6.3L9.7 12L6.5 15.2z" fill="#c77ee6" stroke="#9b4fc4" stroke-width="1.1"/></svg>
<svg style="left:1132.5px;top:121.75px;" width="7" height="3.5" viewBox="0 0 7 3.5"><path d="M0.5 0.5L3.5 3.2L6.5 0.5" fill="none" stroke="#444" stroke-width="1.1"/></svg>
<svg style="left:1150px;top:70px;" width="36" height="32" viewBox="0 0 36 32"><g transform="translate(-1150 -70)" fill="none"><path d="M1154.3 84.6L1158.8 72.8L1163.3 84.6M1155.8 80.6h6" stroke="#2b88d8" stroke-width="1.2"/><path d="M1154.6 86.9h8.5L1154.6 98.9h9" stroke="#333" stroke-width="1.2"/><path d="M1166 79.2h16l-5.6 6.8v8.1h-4.8v-8.1z" fill="#fff" stroke="#333" stroke-width="1.2" stroke-linejoin="round"/></g></svg>
<div class="t" style="left:1151.00px;top:106.94px;font-size:12px;color:#333;;transform:scaleX(0.9892);transform-origin:0 0;">Sort &amp;</div>
<div class="t" style="left:1149.40px;top:122.94px;font-size:12px;color:#333;;transform:scaleX(0.9373);transform-origin:0 0;">Filter</div>
<svg style="left:1178.75px;top:127.125px;" width="5.5" height="2.75" viewBox="0 0 5.5 2.75"><path d="M0.5 0.5L2.75 2.45L5.0 0.5" fill="none" stroke="#444" stroke-width="1.1"/></svg>
<svg style="left:1197px;top:72px;" width="30" height="29" viewBox="0 0 30 29"><circle cx="19" cy="10" r="9.3" fill="#fff" stroke="#333" stroke-width="1.1"/><path d="M12.5 17L1 28" stroke="#333" stroke-width="1.1"/></svg>
<div class="t" style="left:1194.00px;top:106.94px;font-size:12px;color:#333;;transform:scaleX(1.0090);transform-origin:0 0;">Find &amp;</div>
<div class="t" style="left:1191.20px;top:122.94px;font-size:12px;color:#333;;transform:scaleX(0.8993);transform-origin:0 0;">Select</div>
<svg style="left:1225.75px;top:127.125px;" width="5.5" height="2.75" viewBox="0 0 5.5 2.75"><path d="M0.5 0.5L2.75 2.45L5.0 0.5" fill="none" stroke="#444" stroke-width="1.1"/></svg>
<svg style="left:1250px;top:66px;" width="50" height="40" viewBox="0 0 50 40"><g transform="translate(-1250 -66)"><rect x="1259.6" y="70.6" width="31" height="31" fill="#fafafa" stroke="#333" stroke-width="1.2"/><rect x="1260.2" y="71.2" width="29.8" height="4.4" fill="#c4c4c4"/><path d="M1260 75.4h30.4" stroke="#777" stroke-width="1"/><path d="M1260 83.9h30.4M1260 92.1h30.4M1269.8 92.1v9M1279.9 92.1v9" stroke="#999" stroke-width="1"/><circle cx="1273.9" cy="83.4" r="9.4" fill="#fff" stroke="#333" stroke-width="1.2"/><rect x="1268.6" y="81.8" width="3.2" height="5.8" fill="#c8c8c8" stroke="#999" stroke-width="0.6"/><rect x="1272.2" y="77.6" width="3.4" height="10" fill="#fff" stroke="#333" stroke-width="1"/><rect x="1276.1" y="79.2" width="3.4" height="8.5" fill="#7fb6ea" stroke="#1e6fc1" stroke-width="0.8"/><path d="M1280.6 90.2L1290.6 101.6" stroke="#333" stroke-width="1.3"/></g></svg>
<div class="t" style="left:1254.50px;top:106.94px;font-size:12px;color:#333;;transform:scaleX(0.9601);transform-origin:0 0;">Analyze</div>
<div class="t" style="left:1263.00px;top:122.94px;font-size:12px;color:#333;;transform:scaleX(0.9464);transform-origin:0 0;">Data</div>
<svg style="left:1347px;top:151px;" width="11" height="6" viewBox="0 0 11 6"><path d="M0.5 5.5L5.5 0.5L10.5 5.5" fill="none" stroke="#444" stroke-width="1.1"/></svg>
<div class="a" style="left:0px;top:161px;width:1366px;height:46px;background:#e6e6e6;"></div>
<div class="a" style="left:0px;top:160px;width:1366px;height:1px;background:#d2d0ce;"></div>
<div class="a" style="left:0px;top:161px;width:1366px;height:2px;background:linear-gradient(#d8d8d8,#e6e6e6);"></div>
<div class="a" style="left:5px;top:171px;width:102px;height:26px;background:#fff;border:1px solid #c6c6c6"></div>
<div class="t" style="left:12.70px;top:179.00px;font-size:12.4px;color:#262626;;transform:scaleX(0.9467);transform-origin:0 0;">H8</div>
<svg style="left:93px;top:181px;" width="8" height="4" viewBox="0 0 8 4"><path d="M0 0h7.5L3.75 4z" fill="#777"/></svg>
<div class="a" style="left:121px;top:179px;width:2px;height:2px;background:#a6a6a6;"></div>
<div class="a" style="left:121px;top:183.5px;width:2px;height:2px;background:#a6a6a6;"></div>
<div class="a" style="left:121px;top:188px;width:2px;height:2px;background:#a6a6a6;"></div>
<div class="a" style="left:137px;top:171px;width:110px;height:26px;background:#fff;border:1px solid #c6c6c6"></div>
<svg style="left:150px;top:179px;" width="12" height="10" viewBox="0 0 12 10"><path d="M1 0.5l10 9M11 0.5l-10 9" stroke="#bdbdbd" stroke-width="1.5"/></svg>
<svg style="left:186px;top:179px;" width="13" height="11" viewBox="0 0 13 11"><path d="M0.8 6L4.6 9.8L12.4 0.8" fill="none" stroke="#c8c8c8" stroke-width="2"/></svg>
<svg style="left:221px;top:177px;" width="14" height="14" viewBox="0 0 14 14"><path d="M6.5 2.2c-0.8-1.3-2.6-1.2-3.1 0.6L1.8 11.6c-0.4 1.8-1.7 1.8-1.6 1" fill="none" stroke="#555" stroke-width="1.4"/><path d="M2.2 5.2h3.6" stroke="#555" stroke-width="1.2"/><path d="M7.5 6.5c1 0 1.3 0.8 1.8 2.5c0.5 1.8 1 3 2.5 2.6M12.8 6.6c-1.4-0.5-2.4 0.8-3.4 2.3c-1 1.5-1.8 2.6-3 2.3" fill="none" stroke="#555" stroke-width="1.3"/></svg>
<div class="a" style="left:250px;top:171px;width:1112px;height:26px;background:#fff;border:1px solid #c6c6c6"></div>
<svg style="left:1348.0px;top:182.0px;" width="8" height="4.0" viewBox="0 0 8 4.0"><path d="M0.5 0.5L4.0 3.7L7.5 0.5" fill="none" stroke="#444" stroke-width="1.3"/></svg>
<div class="a" style="left:0px;top:207px;width:1345px;height:20px;background:#e6e6e6;"></div>
<div class="a" style="left:0px;top:227px;width:25px;height:451px;background:#e6e6e6;"></div>
<svg style="left:10px;top:211px;" width="13" height="13" viewBox="0 0 13 13"><path d="M12.5 0.5V12.5H0.5z" fill="#b7b7b7"/></svg>
<div class="a" style="left:769px;top:207px;width:146px;height:19px;background:#d2d2d2;"></div>
<div class="a" style="left:0px;top:367px;width:25px;height:19px;background:#d2d2d2;"></div>
<div class="a" style="left:26px;top:227px;width:1318px;height:451px;background:#fff;"></div>
<div class="a" style="left:89px;top:227px;width:1px;height:451px;background:#d4d4d4;"></div>
<div class="a" style="left:159px;top:227px;width:1px;height:451px;background:#d4d4d4;"></div>
<div class="a" style="left:221px;top:227px;width:1px;height:451px;background:#d4d4d4;"></div>
<div class="a" style="left:293px;top:227px;width:1px;height:451px;background:#d4d4d4;"></div>
<div class="a" style="left:440px;top:227px;width:1px;height:451px;background:#d4d4d4;"></div>
<div class="a" style="left:602px;top:227px;width:1px;height:451px;background:#d4d4d4;"></div>
<div class="a" style="left:768px;top:227px;width:1px;height:451px;background:#d4d4d4;"></div>
<div class="a" style="left:915px;top:227px;width:1px;height:451px;background:#d4d4d4;"></div>
<div class="a" style="left:979px;top:227px;width:1px;height:451px;background:#d4d4d4;"></div>
<div class="a" style="left:1043px;top:227px;width:1px;height:451px;background:#d4d4d4;"></div>
<div class="a" style="left:1107px;top:227px;width:1px;height:451px;background:#d4d4d4;"></div>
<div class="a" style="left:1171px;top:227px;width:1px;height:451px;background:#d4d4d4;"></div>
<div class="a" style="left:1235px;top:227px;width:1px;height:451px;background:#d4d4d4;"></div>
<div class="a" style="left:1299px;top:227px;width:1px;height:451px;background:#d4d4d4;"></div>
<div class="a" style="left:26px;top:246px;width:1318px;height:1px;background:#d4d4d4;"></div>
<div class="a" style="left:26px;top:266px;width:1318px;height:1px;background:#d4d4d4;"></div>
<div class="a" style="left:26px;top:286px;width:1318px;height:1px;background:#d4d4d4;"></div>
<div class="a" style="left:26px;top:306px;width:1318px;height:1px;background:#d4d4d4;"></div>
<div class="a" style="left:26px;top:326px;width:1318px;height:1px;background:#d4d4d4;"></div>
<div class="a" style="left:26px;top:346px;width:1318px;height:1px;background:#d4d4d4;"></div>
<div class="a" style="left:26px;top:366px;width:1318px;height:1px;background:#d4d4d4;"></div>
<div class="a" style="left:26px;top:386px;width:1318px;height:1px;background:#d4d4d4;"></div>
<div class="a" style="left:26px;top:406px;width:1318px;height:1px;background:#d4d4d4;"></div>
<div class="a" style="left:26px;top:426px;width:1318px;height:1px;background:#d4d4d4;"></div>
<div class="a" style="left:26px;top:446px;width:1318px;height:1px;background:#d4d4d4;"></div>
<div class="a" style="left:26px;top:466px;width:1318px;height:1px;background:#d4d4d4;"></div>
<div class="a" style="left:26px;top:486px;width:1318px;height:1px;background:#d4d4d4;"></div>
<div class="a" style="left:26px;top:506px;width:1318px;height:1px;background:#d4d4d4;"></div>
<div class="a" style="left:26px;top:526px;width:1318px;height:1px;background:#d4d4d4;"></div>
<div class="a" style="left:26px;top:546px;width:1318px;height:1px;background:#d4d4d4;"></div>
<div class="a" style="left:26px;top:566px;width:1318px;height:1px;background:#d4d4d4;"></div>
<div class="a" style="left:26px;top:586px;width:1318px;height:1px;background:#d4d4d4;"></div>
<div class="a" style="left:26px;top:606px;width:1318px;height:1px;background:#d4d4d4;"></div>
<div class="a" style="left:26px;top:627px;width:1318px;height:1px;background:#d4d4d4;"></div>
<div class="a" style="left:26px;top:648px;width:1318px;height:1px;background:#d4d4d4;"></div>
<div class="a" style="left:26px;top:668px;width:1318px;height:1px;background:#d4d4d4;"></div>
<div class="a" style="left:25px;top:208px;width:1px;height:18px;background:#b5b5b5;"></div>
<div class="a" style="left:89px;top:208px;width:1px;height:18px;background:#b5b5b5;"></div>
<div class="a" style="left:159px;top:208px;width:1px;height:18px;background:#b5b5b5;"></div>
<div class="a" style="left:221px;top:208px;width:1px;height:18px;background:#b5b5b5;"></div>
<div class="a" style="left:293px;top:208px;width:1px;height:18px;background:#b5b5b5;"></div>
<div class="a" style="left:440px;top:208px;width:1px;height:18px;background:#b5b5b5;"></div>
<div class="a" style="left:602px;top:208px;width:1px;height:18px;background:#b5b5b5;"></div>
<div class="a" style="left:768px;top:208px;width:1px;height:18px;background:#b5b5b5;"></div>
<div class="a" style="left:915px;top:208px;width:1px;height:18px;background:#b5b5b5;"></div>
<div class="a" style="left:979px;top:208px;width:1px;height:18px;background:#b5b5b5;"></div>
<div class="a" style="left:1043px;top:208px;width:1px;height:18px;background:#b5b5b5;"></div>
<div class="a" style="left:1107px;top:208px;width:1px;height:18px;background:#b5b5b5;"></div>
<div class="a" style="left:1171px;top:208px;width:1px;height:18px;background:#b5b5b5;"></div>
<div class="a" style="left:1235px;top:208px;width:1px;height:18px;background:#b5b5b5;"></div>
<div class="a" style="left:1299px;top:208px;width:1px;height:18px;background:#b5b5b5;"></div>
<div class="a" style="left:25px;top:207px;width:1px;height:471px;background:#9e9e9e;"></div>
<div class="a" style="left:0px;top:226px;width:1345px;height:1px;background:#9e9e9e;"></div>
<div class="a" style="left:1344px;top:226px;width:1px;height:453px;background:#ababab;"></div>
<div class="a" style="left:26px;top:678px;width:1319px;height:1px;background:#ababab;"></div>
<div class="a" style="left:0px;top:246px;width:25px;height:1px;background:#bdbdbd;"></div>
<div class="a" style="left:0px;top:266px;width:25px;height:1px;background:#bdbdbd;"></div>
<div class="a" style="left:0px;top:286px;width:25px;height:1px;background:#bdbdbd;"></div>
<div class="a" style="left:0px;top:306px;width:25px;height:1px;background:#bdbdbd;"></div>
<div class="a" style="left:0px;top:326px;width:25px;height:1px;background:#bdbdbd;"></div>
<div class="a" style="left:0px;top:346px;width:25px;height:1px;background:#bdbdbd;"></div>
<div class="a" style="left:0px;top:366px;width:25px;height:1px;background:#bdbdbd;"></div>
<div class="a" style="left:0px;top:386px;width:25px;height:1px;background:#bdbdbd;"></div>
<div class="a" style="left:0px;top:406px;width:25px;height:1px;background:#bdbdbd;"></div>
<div class="a" style="left:0px;top:426px;width:25px;height:1px;background:#bdbdbd;"></div>
<div class="a" style="left:0px;top:446px;width:25px;height:1px;background:#bdbdbd;"></div>
<div class="a" style="left:0px;top:466px;width:25px;height:1px;background:#bdbdbd;"></div>
<div class="a" style="left:0px;top:486px;width:25px;height:1px;background:#bdbdbd;"></div>
<div class="a" style="left:0px;top:506px;width:25px;height:1px;background:#bdbdbd;"></div>
<div class="a" style="left:0px;top:526px;width:25px;height:1px;background:#bdbdbd;"></div>
<div class="a" style="left:0px;top:546px;width:25px;height:1px;background:#bdbdbd;"></div>
<div class="a" style="left:0px;top:566px;width:25px;height:1px;background:#bdbdbd;"></div>
<div class="a" style="left:0px;top:586px;width:25px;height:1px;background:#bdbdbd;"></div>
<div class="a" style="left:0px;top:606px;width:25px;height:1px;background:#bdbdbd;"></div>
<div class="a" style="left:0px;top:627px;width:25px;height:1px;background:#bdbdbd;"></div>
<div class="a" style="left:0px;top:648px;width:25px;height:1px;background:#bdbdbd;"></div>
<div class="a" style="left:0px;top:668px;width:25px;height:1px;background:#bdbdbd;"></div>
<div class="t" style="left:26px;top:212px;width:63px;text-align:center;font-size:12px;color:#222">A</div>
<div class="t" style="left:90px;top:212px;width:69px;text-align:center;font-size:12px;color:#222">B</div>
<div class="t" style="left:160px;top:212px;width:61px;text-align:center;font-size:12px;color:#222">C</div>
<div class="t" style="left:222px;top:212px;width:71px;text-align:center;font-size:12px;color:#222">D</div>
<div class="t" style="left:294px;top:212px;width:146px;text-align:center;font-size:12px;color:#222">E</div>
<div class="t" style="left:441px;top:212px;width:161px;text-align:center;font-size:12px;color:#222">F</div>
<div class="t" style="left:603px;top:212px;width:165px;text-align:center;font-size:12px;color:#222">G</div>
<div class="t" style="left:769px;top:212px;width:146px;text-align:center;font-size:12px;color:#1e6b40">H</div>
<div class="t" style="left:916px;top:212px;width:63px;text-align:center;font-size:12px;color:#222">I</div>
<div class="t" style="left:980px;top:212px;width:63px;text-align:center;font-size:12px;color:#222">J</div>
<div class="t" style="left:1044px;top:212px;width:63px;text-align:center;font-size:12px;color:#222">K</div>
<div class="t" style="left:1108px;top:212px;width:63px;text-align:center;font-size:12px;color:#222">L</div>
<div class="t" style="left:1172px;top:212px;width:63px;text-align:center;font-size:12px;color:#222">M</div>
<div class="t" style="left:1236px;top:212px;width:63px;text-align:center;font-size:12px;color:#222">N</div>
<div class="t" style="left:1300px;top:212px;width:64px;text-align:center;font-size:12px;color:#222">O</div>
<div class="t" style="left:0px;top:230.5px;width:25px;text-align:center;font-size:13px;color:#222">1</div>
<div class="t" style="left:0px;top:250.5px;width:25px;text-align:center;font-size:13px;color:#222">2</div>
<div class="t" style="left:0px;top:270.5px;width:25px;text-align:center;font-size:13px;color:#222">3</div>
<div class="t" style="left:0px;top:290.5px;width:25px;text-align:center;font-size:13px;color:#222">4</div>
<div class="t" style="left:0px;top:310.5px;width:25px;text-align:center;font-size:13px;color:#222">5</div>
<div class="t" style="left:0px;top:330.5px;width:25px;text-align:center;font-size:13px;color:#222">6</div>
<div class="t" style="left:0px;top:350.5px;width:25px;text-align:center;font-size:13px;color:#222">7</div>
<div class="t" style="left:0px;top:370.5px;width:25px;text-align:center;font-size:13px;color:#1e6b40">8</div>
<div class="t" style="left:0px;top:390.5px;width:25px;text-align:center;font-size:13px;color:#222">9</div>
<div class="t" style="left:0px;top:410.5px;width:25px;text-align:center;font-size:13px;color:#222">10</div>
<div class="t" style="left:0px;top:430.5px;width:25px;text-align:center;font-size:13px;color:#222">11</div>
<div class="t" style="left:0px;top:450.5px;width:25px;text-align:center;font-size:13px;color:#222">12</div>
<div class="t" style="left:0px;top:470.5px;width:25px;text-align:center;font-size:13px;color:#222">13</div>
<div class="t" style="left:0px;top:490.5px;width:25px;text-align:center;font-size:13px;color:#222">14</div>
<div class="t" style="left:0px;top:510.5px;width:25px;text-align:center;font-size:13px;color:#222">15</div>
<div class="t" style="left:0px;top:530.5px;width:25px;text-align:center;font-size:13px;color:#222">16</div>
<div class="t" style="left:0px;top:550.5px;width:25px;text-align:center;font-size:13px;color:#222">17</div>
<div class="t" style="left:0px;top:570.5px;width:25px;text-align:center;font-size:13px;color:#222">18</div>
<div class="t" style="left:0px;top:590.5px;width:25px;text-align:center;font-size:13px;color:#222">19</div>
<div class="t" style="left:0px;top:611.0px;width:25px;text-align:center;font-size:13px;color:#222">20</div>
<div class="t" style="left:0px;top:632.0px;width:25px;text-align:center;font-size:13px;color:#222">21</div>
<div class="t" style="left:0px;top:652.5px;width:25px;text-align:center;font-size:13px;color:#222">22</div>
<div class="t" style="left:0px;top:672px;width:25px;text-align:center;font-size:13px;color:#222">23</div>
<div class="a" style="left:769px;top:225px;width:146px;height:2px;background:#217346;"></div>
<div class="a" style="left:24px;top:366px;width:2px;height:21px;background:#217346;"></div>
<div class="a" style="left:1345px;top:207px;width:21px;height:472px;background:#e6e6e6;"></div>
<div class="a" style="left:1348px;top:209px;width:15px;height:15px;background:#fff;border:1px solid #c6c6c6"></div>
<svg style="left:1351px;top:214px;" width="9" height="5" viewBox="0 0 9 5"><path d="M0 5h9L4.5 0z" fill="#777"/></svg>
<div class="a" style="left:1348px;top:224px;width:15px;height:236px;background:#fff;border:1px solid #c6c6c6"></div>
<div class="a" style="left:1349px;top:460px;width:13px;height:205px;background:#d6d6d6;"></div>
<div class="a" style="left:1348px;top:664px;width:15px;height:15px;background:#fff;border:1px solid #c6c6c6"></div>
<svg style="left:1351px;top:669px;" width="9" height="5" viewBox="0 0 9 5"><path d="M0 0h9L4.5 5z" fill="#777"/></svg>
<div class="a" style="left:26px;top:567px;width:63px;height:19px;background:#b4c6e7;"></div>
<div class="t" style="left:28.00px;top:571.42px;font-size:13.2px;color:#000;font-weight:bold;;transform:scaleX(1.0226);transform-origin:0 0;">a)</div>
<div class="t" style="left:92.00px;top:591.42px;font-size:13.2px;color:#000;font-weight:bold;;transform:scaleX(0.9924);transform-origin:0 0;">Plan A: Minimum rate of 1,000/month, subcontract for additional</div>
<div class="a" style="left:90px;top:628px;width:677px;height:19px;background:#d9d9d9;"></div>
<div class="a" style="left:88px;top:626px;width:681px;height:2px;background:#000;"></div>
<div class="a" style="left:88px;top:647px;width:681px;height:2px;background:#000;"></div>
<div class="a" style="left:88px;top:668px;width:681px;height:1px;background:#000;"></div>
<div class="a" style="left:88px;top:626px;width:2px;height:52px;background:#000;"></div>
<div class="a" style="left:767px;top:626px;width:2px;height:52px;background:#000;"></div>
<div class="a" style="left:159px;top:626px;width:1px;height:52px;background:#000;"></div>
<div class="a" style="left:221px;top:626px;width:1px;height:52px;background:#000;"></div>
<div class="a" style="left:293px;top:626px;width:1px;height:52px;background:#000;"></div>
<div class="a" style="left:440px;top:626px;width:1px;height:52px;background:#000;"></div>
<div class="a" style="left:602px;top:626px;width:1px;height:52px;background:#000;"></div>
<div class="t" style="left:103.50px;top:631.92px;font-size:13.2px;color:#000;font-weight:bold;;transform:scaleX(0.9989);transform-origin:0 0;">Period</div>
<div class="t" style="left:164.50px;top:631.92px;font-size:13.2px;color:#000;font-weight:bold;;transform:scaleX(0.9994);transform-origin:0 0;">Demand</div>
<div class="t" style="left:223.00px;top:631.92px;font-size:13.2px;color:#000;font-weight:bold;;transform:scaleX(0.9769);transform-origin:0 0;">Production</div>
<div class="t" style="left:306.50px;top:631.92px;font-size:13.2px;color:#000;font-weight:bold;;transform:scaleX(1.0070);transform-origin:0 0;">Inventorry (ending)</div>
<div class="t" style="left:485.00px;top:631.92px;font-size:13.2px;color:#000;font-weight:bold;;transform:scaleX(0.9358);transform-origin:0 0;">Subcontract</div>
<div class="t" style="left:656.50px;top:631.92px;font-size:13.2px;color:#000;font-weight:bold;;transform:scaleX(0.9094);transform-origin:0 0;">Extra cost</div>
<div class="t" style="left:113.50px;top:653.42px;font-size:13.2px;color:#000;font-weight:bold;;transform:scaleX(1.1016);transform-origin:0 0;">Jul</div>
<div class="t" style="left:175.00px;top:653.42px;font-size:13.2px;color:#000;;transform:scaleX(1.0564);transform-origin:0 0;">1000</div>
<div class="t" style="left:241.50px;top:653.42px;font-size:13.2px;color:#000;;transform:scaleX(1.0564);transform-origin:0 0;">1000</div>
<div class="a" style="left:26px;top:669px;width:1318px;height:9px;overflow:hidden">
<div class="t" style="left:85.50px;top:5.42px;font-size:13.2px;color:#000;font-weight:bold;;transform:scaleX(0.9750);transform-origin:0 0;">Aug</div>
<div class="t" style="left:149.00px;top:5.42px;font-size:13.2px;color:#000;;transform:scaleX(1.0564);transform-origin:0 0;">1200</div>
<div class="t" style="left:215.50px;top:5.42px;font-size:13.2px;color:#000;;transform:scaleX(1.0564);transform-origin:0 0;">1000</div>
</div>
<div class="a" style="left:769px;top:365px;width:148px;height:2px;background:#217346;"></div>
<div class="a" style="left:769px;top:386px;width:143px;height:2px;background:#217346;"></div>
<div class="a" style="left:915px;top:365px;width:2px;height:18px;background:#217346;"></div>
<div class="a" style="left:913px;top:384px;width:5px;height:5px;background:#217346;"></div>
<div class="a" style="left:45px;top:247px;width:766px;height:314px;background:#fbe5d6;border:1px solid #c0c0c0"></div>
<div class="t" style="left:55.00px;top:255.42px;font-size:13.2px;color:#111;;transform:scaleX(1.0126);transform-origin:0 0;"><b>Q1)</b> The S&amp;OP team at Kansas Furniture, has received the following estimates of demand require</div>
<div class="t" style="left:55.00px;top:291.22px;font-size:13.2px;color:#111;;transform:scaleX(1.0253);transform-origin:0 0;"><b>a)</b> Assuming one-time stockout costs for lost sales of $100 per unit, inventory carrying costs of $25 per unit per month, and</div>
<div class="t" style="left:55.00px;top:309.12px;font-size:13.2px;color:#111;;transform:scaleX(1.0193);transform-origin:0 0;">zero beginning and ending inventory, evaluate these two plans on an <i>incremental</i> cost basis:</div>
<div class="t" style="left:55.00px;top:327.02px;font-size:13.2px;color:#111;;transform:scaleX(1.0288);transform-origin:0 0;">&#9670; <b><i>Plan A:</i></b> Produce at a steady rate (equal to minimum requirements) of 1,000 units per month and subcontract additional</div>
<div class="t" style="left:55.00px;top:344.92px;font-size:13.2px;color:#111;;transform:scaleX(1.0314);transform-origin:0 0;">units at a $60 per unit premium cost.</div>
<div class="t" style="left:55.00px;top:362.82px;font-size:13.2px;color:#111;;transform:scaleX(1.0246);transform-origin:0 0;">&#9670; <b><i>Plan B:</i></b> Vary the workforce, to produce the prior month&#8217;s demand. The fi rm produced 1,300 units in June. The cost of</div>
<div class="t" style="left:55.00px;top:380.72px;font-size:13.2px;color:#111;;transform:scaleX(1.0245);transform-origin:0 0;">hiring additional workers is $3,000 per 100 units produced.</div>
<div class="t" style="left:55.00px;top:398.62px;font-size:13.2px;color:#111;;transform:scaleX(1.0066);transform-origin:0 0;">The cost of layoff s is $6,000 per 100 units cut back.</div>
<div class="t" style="left:55.00px;top:434.42px;font-size:13.2px;color:#111;;transform:scaleX(1.0274);transform-origin:0 0;"><b><i>Note:</i></b> Both hiring and layoff costs are incurred in the month of the change, (i.e. going from production of 1,300 in July to</div>
<div class="t" style="left:55.00px;top:452.32px;font-size:13.2px;color:#111;;transform:scaleX(1.0227);transform-origin:0 0;">1,000 in August requires a layoff (and related costs) of 300 units in August, just as going from production of 1,000 in August</div>
<div class="t" style="left:55.00px;top:470.22px;font-size:13.2px;color:#111;;transform:scaleX(1.0206);transform-origin:0 0;">to 1,200 in September requires hiring (and related costs) of 200 units in September).</div>
<div class="t" style="left:55.00px;top:506.02px;font-size:13.2px;color:#111;;transform:scaleX(1.0131);transform-origin:0 0;"><b>b)</b> Which plan is best and why?comments:</div>
<div class="a" style="left:0px;top:679px;width:1366px;height:27px;background:#e6e6e6;"></div>
<svg style="left:28px;top:688px;" width="5" height="9" viewBox="0 0 5 9"><path d="M5 0v9L0 4.5z" fill="#c4c4c4"/></svg>
<svg style="left:56px;top:688px;" width="5" height="9" viewBox="0 0 5 9"><path d="M0 0v9l5-4.5z" fill="#c4c4c4"/></svg>
<div class="a" style="left:100px;top:678px;width:41px;height:25px;background:#fff;border-left:1px solid #c6c6c6;border-right:1px solid #c6c6c6"></div>
<div class="a" style="left:100px;top:701px;width:41px;height:2px;background:#217346;"></div>
<div class="t" style="left:112.00px;top:684.59px;font-size:13px;color:#217346;font-weight:bold;transform:scaleX(0.9514);transform-origin:0 0;">Q1</div>
<svg style="left:173px;top:683px;" width="17" height="17" viewBox="0 0 17 17"><circle cx="8.5" cy="8.5" r="7.8" fill="none" stroke="#777" stroke-width="1.1"/><path d="M8.5 4.5v8M4.5 8.5h8" stroke="#777" stroke-width="1.3"/></svg>
<div class="a" style="left:819px;top:687px;width:2px;height:2px;background:#aaa;"></div>
<div class="a" style="left:819px;top:691px;width:2px;height:2px;background:#aaa;"></div>
<div class="a" style="left:819px;top:695px;width:2px;height:2px;background:#aaa;"></div>
<div class="a" style="left:836px;top:685px;width:15px;height:15px;background:#fff;border:1px solid #c6c6c6"></div>
<svg style="left:840px;top:689px;" width="5" height="8" viewBox="0 0 5 8"><path d="M5 0v8L0 4z" fill="#666"/></svg>
<div class="a" style="left:851px;top:685px;width:444px;height:15px;background:#fff;border:1px solid #c6c6c6;border-left:none"></div>
<div class="a" style="left:1295px;top:686px;width:35px;height:13px;background:#d6d6d6;"></div>
<div class="a" style="left:1330px;top:685px;width:15px;height:15px;background:#fff;border:1px solid #c6c6c6"></div>
<svg style="left:1336px;top:689px;" width="5" height="8" viewBox="0 0 5 8"><path d="M0 0v8l5-4z" fill="#666"/></svg>
<div class="a" style="left:0px;top:706px;width:1366px;height:1px;background:#d0d0d0;"></div>
<div class="a" style="left:0px;top:707px;width:1366px;height:21px;background:#f3f2f1;"></div>
<div class="t" style="left:7.00px;top:712.44px;font-size:12px;color:#444;;transform:scaleX(0.9225);transform-origin:0 0;">Ready</div>
<div class="a" style="left:1066px;top:707px;width:40px;height:21px;background:#d2d0ce;"></div>
<svg style="left:1079px;top:710px;" width="13" height="13" viewBox="0 0 13 13"><rect x="0.75" y="0.75" width="11.5" height="11.5" fill="none" stroke="#333" stroke-width="1.5"/><path d="M4.6 0.5v12M8.4 0.5v12M0.5 4.6h12M0.5 8.4h12" stroke="#333" stroke-width="1.3"/></svg>
<svg style="left:1119px;top:710px;" width="14" height="13" viewBox="0 0 14 13"><rect x="0.75" y="0.75" width="12.5" height="11.5" fill="none" stroke="#333" stroke-width="1.4"/><rect x="3.6" y="2.7" width="6.8" height="7.6" fill="none" stroke="#333" stroke-width="1.2"/><path d="M5 4.8h4M5 6.5h4M5 8.2h4" stroke="#333" stroke-width="1"/></svg>
<svg style="left:1159px;top:710px;" width="14" height="13" viewBox="0 0 14 13"><rect x="0.75" y="0.75" width="12.5" height="11.5" fill="none" stroke="#333" stroke-width="1.4"/><path d="M3 0.5V7.2H8.2V0.5M5.6 0.5V7.2" fill="none" stroke="#333" stroke-width="1.2"/></svg>
<div class="a" style="left:1193px;top:716px;width:7px;height:1px;background:#555;"></div>
<div class="a" style="left:1205px;top:716px;width:100px;height:1px;background:#777;"></div>
<div class="a" style="left:1253px;top:711px;width:5px;height:11px;background:#767676;"></div>
<div class="a" style="left:1308px;top:716px;width:11px;height:1px;background:#555;"></div>
<div class="a" style="left:1313px;top:711px;width:1px;height:11px;background:#555;"></div>
<div class="t" style="left:1331.00px;top:712.78px;font-size:11px;color:#444;;transform:scaleX(0.9595);transform-origin:0 0;">100%</div>
<div class="a" style="left:0px;top:728px;width:1366px;height:8px;background:#1c1f2b;"></div>
<div class="a" style="left:48px;top:728px;width:344px;height:8px;background:#f3f3f3;"></div>
<div class="a" style="left:640px;top:728px;width:47px;height:8px;background:#4b4e58;"></div>
<div class="a" style="left:1361px;top:728px;width:1px;height:8px;background:#888;"></div>
<div class="a" style="left:1250px;top:728px;width:80px;height:8px;overflow:hidden"><div class="t" style="left:7px;top:4px;font-size:12px;color:#fff">5:01 PM</div></div>
</body></html>
